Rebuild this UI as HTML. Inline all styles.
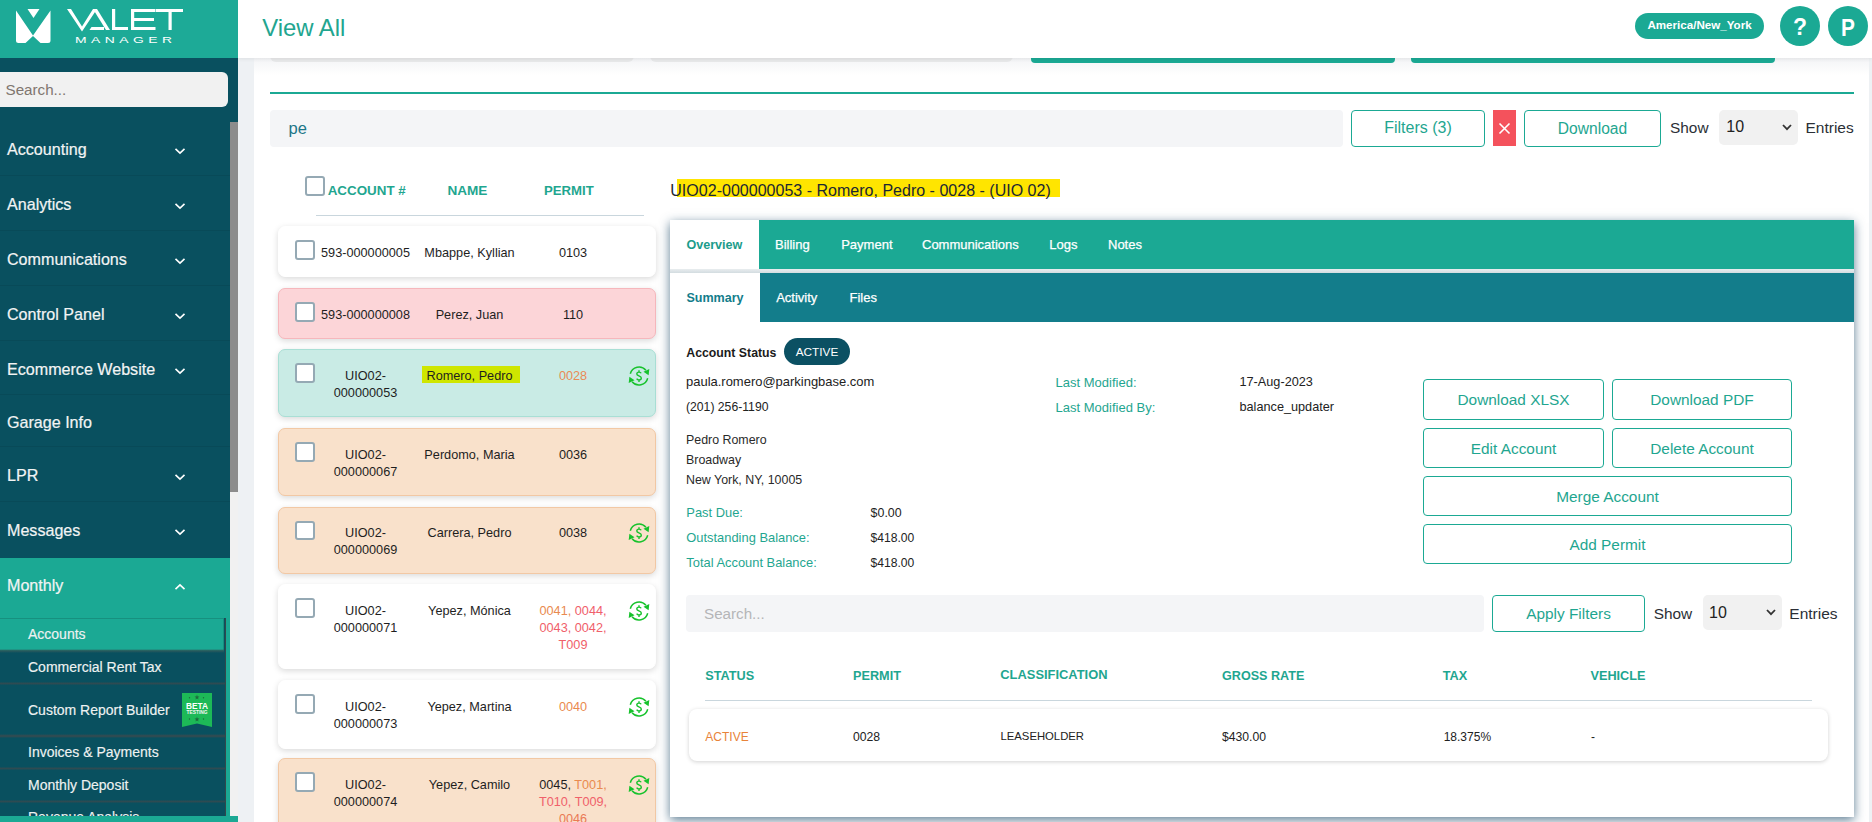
<!DOCTYPE html>
<html><head><meta charset="utf-8"><title>View All</title>
<style>
html,body{margin:0;padding:0;}
body{width:1872px;height:822px;overflow:hidden;position:relative;background:#eef1f4;font-family:"Liberation Sans",sans-serif;}
.t{position:absolute;line-height:1;white-space:nowrap;}
.r{position:absolute;box-sizing:border-box;}
svg{position:absolute;overflow:visible;}
</style></head><body>

<div class="r" style="left:254px;top:58px;width:1615px;height:764px;background:#ffffff;"></div>
<div class="r" style="left:254px;top:58px;width:1615px;height:17px;background:linear-gradient(#f3f4f6,#ffffff);"></div>
<div class="r" style="left:270px;top:50px;width:364px;height:11.5px;background:#e8e9ea;border-radius:0 0 6px 6px;"></div>
<div class="r" style="left:650px;top:50px;width:363px;height:11.5px;background:#e8e9ea;border-radius:0 0 6px 6px;"></div>
<div class="r" style="left:1031px;top:50px;width:364px;height:12.600000000000001px;background:#1ba994;border-radius:0 0 4px 4px;"></div>
<div class="r" style="left:1411px;top:50px;width:364px;height:12.600000000000001px;background:#1ba994;border-radius:0 0 4px 4px;"></div>
<div class="r" style="left:270px;top:92px;width:1584px;height:2px;background:#1ba994;"></div>
<div class="r" style="left:270px;top:110px;width:1073px;height:37px;background:#f4f5f7;border-radius:4px;"></div>
<div class="t" style="left:288.50px;top:120.43px;font-size:16.5px;color:#1d7688;font-weight:normal;">pe</div>
<div class="r" style="left:1351px;top:110px;width:134px;height:37px;background:#fff;border:1.5px solid #1ba994;border-radius:4px;"></div>
<div class="t" style="left:1351.00px;top:120.46px;width:134px;text-align:center;font-size:16px;color:#1fa690;font-weight:normal;">Filters (3)</div>
<div class="r" style="left:1493px;top:110px;width:23px;height:36px;background:#f4525c;"></div>
<svg style="left:1499px;top:122.5px" width="11" height="11" viewBox="0 0 11 11"><path d="M0.5 0.5L10.5 10.5M10.5 0.5L0.5 10.5" stroke="#fff" stroke-width="1.6"/></svg>
<div class="r" style="left:1524px;top:110px;width:137px;height:37px;background:#fff;border:1.5px solid #1ba994;border-radius:4px;"></div>
<div class="t" style="left:1524.00px;top:120.79px;width:137px;text-align:center;font-size:15.6px;color:#1fa690;font-weight:normal;">Download</div>
<div class="t" style="left:1670.00px;top:119.76px;font-size:15.4px;color:#2b2f36;font-weight:normal;">Show</div>
<div class="r" style="left:1719px;top:110px;width:79px;height:35px;background:#f1f1f1;border-radius:5px;"></div>
<div class="t" style="left:1726.30px;top:119.46px;font-size:16px;color:#222;font-weight:normal;">10</div>
<svg style="left:1782px;top:124px" width="10" height="7" viewBox="0 0 10 7"><path d="M1 1L5 5.2L9 1" fill="none" stroke="#333" stroke-width="1.8"/></svg>
<div class="t" style="left:1805.50px;top:119.68px;font-size:15.5px;color:#2b2f36;font-weight:normal;">Entries</div>
<div class="r" style="left:305px;top:176px;width:19.5px;height:19.5px;background:#fff;border:2px solid #95a9b4;border-radius:3px;"></div>
<div class="t" style="left:327.70px;top:183.96px;font-size:13.4px;color:#1fa690;font-weight:bold;">ACCOUNT #</div>
<div class="t" style="left:447.40px;top:183.79px;font-size:13.6px;color:#1fa690;font-weight:bold;">NAME</div>
<div class="t" style="left:544.00px;top:184.13px;font-size:13.2px;color:#1fa690;font-weight:bold;">PERMIT</div>
<div class="r" style="left:316px;top:215px;width:328px;height:1px;background:#c9d6dd;"></div>
<div class="r" style="left:677px;top:178.5px;width:383px;height:18.0px;background:#ffe500;"></div>
<div class="t" style="left:670.30px;top:182.21px;font-size:16.05px;color:#1b2733;font-weight:normal;">UIO02-000000053 - Romero, Pedro - 0028 - (UIO 02)</div>
<div class="r" style="left:278px;top:226px;width:378px;height:51px;background:#ffffff;border:1px solid #ffffff;border-radius:7px;box-shadow:0 2px 6px rgba(0,0,0,0.15);"></div>
<div class="r" style="left:295px;top:240.2px;width:19.5px;height:19.5px;background:#fff;border:2px solid #95a9b4;border-radius:3px;"></div>
<div class="t" style="left:305.50px;top:246.95px;width:120px;text-align:center;font-size:12.7px;color:#1e1e1e;font-weight:normal;">593-000000005</div>
<div class="t" style="left:409.50px;top:246.95px;width:120px;text-align:center;font-size:12.7px;color:#1e1e1e;font-weight:normal;">Mbappe, Kyllian</div>
<div class="t" style="left:518.00px;top:246.95px;width:110px;text-align:center;font-size:12.7px;color:#1e1e1e;font-weight:normal;">0103</div>
<div class="r" style="left:278px;top:288px;width:378px;height:51px;background:#fcd5d8;border:1px solid #f6b7bc;border-radius:7px;box-shadow:0 2px 6px rgba(0,0,0,0.15);"></div>
<div class="r" style="left:295px;top:302.2px;width:19.5px;height:19.5px;background:#fff;border:2px solid #95a9b4;border-radius:3px;"></div>
<div class="t" style="left:305.50px;top:308.95px;width:120px;text-align:center;font-size:12.7px;color:#1e1e1e;font-weight:normal;">593-000000008</div>
<div class="t" style="left:409.50px;top:308.95px;width:120px;text-align:center;font-size:12.7px;color:#1e1e1e;font-weight:normal;">Perez, Juan</div>
<div class="t" style="left:518.00px;top:308.95px;width:110px;text-align:center;font-size:12.7px;color:#1e1e1e;font-weight:normal;">110</div>
<div class="r" style="left:278px;top:349px;width:378px;height:68px;background:#c9ebe5;border:1px solid #a9dfd5;border-radius:7px;box-shadow:0 2px 6px rgba(0,0,0,0.15);"></div>
<div class="r" style="left:295px;top:363.2px;width:19.5px;height:19.5px;background:#fff;border:2px solid #95a9b4;border-radius:3px;"></div>
<div class="t" style="left:305.50px;top:369.95px;width:120px;text-align:center;font-size:12.7px;color:#1e1e1e;font-weight:normal;">UIO02-</div>
<div class="t" style="left:305.50px;top:386.95px;width:120px;text-align:center;font-size:12.7px;color:#1e1e1e;font-weight:normal;">000000053</div>
<div class="r" style="left:422.4px;top:365.5px;width:97.60000000000002px;height:17.5px;background:#cfe600;"></div>
<div class="t" style="left:409.50px;top:369.95px;width:120px;text-align:center;font-size:12.7px;color:#1e1e1e;font-weight:normal;">Romero, Pedro</div>
<div class="t" style="left:518.00px;top:369.95px;width:110px;text-align:center;font-size:12.7px;color:#1e1e1e;font-weight:normal;"><span style="color:#ea8a55">0028</span></div>
<svg style="left:628.5px;top:365.8px" width="20" height="20" viewBox="0 0 20 20"><g fill="none" stroke="#17c22c" stroke-width="1.5"><path d="M1.3 7.7A9 9 0 0 1 16.9 4.2"/><path d="M18.7 12.3A9 9 0 0 1 3.1 15.8"/><path d="M12.2 7.3C11.8 6.5 11 6.1 10 6.1C8.7 6.1 7.8 6.8 7.8 7.9C7.8 10.1 12.3 9.5 12.3 12C12.3 13.2 11.3 13.9 10 13.9C8.9 13.9 8.1 13.4 7.7 12.6M10 4.2V6.1M10 13.9V15.9" stroke-width="1.4"/></g><path d="M19.6 9.3L20.3 3.1L14.5 5.8Z" fill="#17c22c"/><path d="M0.4 10.7L-0.3 16.9L5.5 14.2Z" fill="#17c22c"/></svg>
<div class="r" style="left:278px;top:428px;width:378px;height:68px;background:#f9e1cb;border:1px solid #f2c8a4;border-radius:7px;box-shadow:0 2px 6px rgba(0,0,0,0.15);"></div>
<div class="r" style="left:295px;top:442.2px;width:19.5px;height:19.5px;background:#fff;border:2px solid #95a9b4;border-radius:3px;"></div>
<div class="t" style="left:305.50px;top:448.95px;width:120px;text-align:center;font-size:12.7px;color:#1e1e1e;font-weight:normal;">UIO02-</div>
<div class="t" style="left:305.50px;top:465.95px;width:120px;text-align:center;font-size:12.7px;color:#1e1e1e;font-weight:normal;">000000067</div>
<div class="t" style="left:409.50px;top:448.95px;width:120px;text-align:center;font-size:12.7px;color:#1e1e1e;font-weight:normal;">Perdomo, Maria</div>
<div class="t" style="left:518.00px;top:448.95px;width:110px;text-align:center;font-size:12.7px;color:#1e1e1e;font-weight:normal;">0036</div>
<div class="r" style="left:278px;top:506.5px;width:378px;height:67.5px;background:#f9e1cb;border:1px solid #f2c8a4;border-radius:7px;box-shadow:0 2px 6px rgba(0,0,0,0.15);"></div>
<div class="r" style="left:295px;top:520.7px;width:19.5px;height:19.5px;background:#fff;border:2px solid #95a9b4;border-radius:3px;"></div>
<div class="t" style="left:305.50px;top:527.45px;width:120px;text-align:center;font-size:12.7px;color:#1e1e1e;font-weight:normal;">UIO02-</div>
<div class="t" style="left:305.50px;top:544.45px;width:120px;text-align:center;font-size:12.7px;color:#1e1e1e;font-weight:normal;">000000069</div>
<div class="t" style="left:409.50px;top:527.45px;width:120px;text-align:center;font-size:12.7px;color:#1e1e1e;font-weight:normal;">Carrera, Pedro</div>
<div class="t" style="left:518.00px;top:527.45px;width:110px;text-align:center;font-size:12.7px;color:#1e1e1e;font-weight:normal;">0038</div>
<svg style="left:628.5px;top:523.3px" width="20" height="20" viewBox="0 0 20 20"><g fill="none" stroke="#17c22c" stroke-width="1.5"><path d="M1.3 7.7A9 9 0 0 1 16.9 4.2"/><path d="M18.7 12.3A9 9 0 0 1 3.1 15.8"/><path d="M12.2 7.3C11.8 6.5 11 6.1 10 6.1C8.7 6.1 7.8 6.8 7.8 7.9C7.8 10.1 12.3 9.5 12.3 12C12.3 13.2 11.3 13.9 10 13.9C8.9 13.9 8.1 13.4 7.7 12.6M10 4.2V6.1M10 13.9V15.9" stroke-width="1.4"/></g><path d="M19.6 9.3L20.3 3.1L14.5 5.8Z" fill="#17c22c"/><path d="M0.4 10.7L-0.3 16.9L5.5 14.2Z" fill="#17c22c"/></svg>
<div class="r" style="left:278px;top:584px;width:378px;height:85px;background:#ffffff;border:1px solid #ffffff;border-radius:7px;box-shadow:0 2px 6px rgba(0,0,0,0.15);"></div>
<div class="r" style="left:295px;top:598.2px;width:19.5px;height:19.5px;background:#fff;border:2px solid #95a9b4;border-radius:3px;"></div>
<div class="t" style="left:305.50px;top:604.95px;width:120px;text-align:center;font-size:12.7px;color:#1e1e1e;font-weight:normal;">UIO02-</div>
<div class="t" style="left:305.50px;top:621.95px;width:120px;text-align:center;font-size:12.7px;color:#1e1e1e;font-weight:normal;">000000071</div>
<div class="t" style="left:409.50px;top:604.95px;width:120px;text-align:center;font-size:12.7px;color:#1e1e1e;font-weight:normal;">Yepez, M&oacute;nica</div>
<div class="t" style="left:518.00px;top:604.95px;width:110px;text-align:center;font-size:12.7px;color:#1e1e1e;font-weight:normal;"><span style="color:#e98a4f">0041,</span> <span style="color:#f0606a">0044,</span></div>
<div class="t" style="left:518.00px;top:621.95px;width:110px;text-align:center;font-size:12.7px;color:#1e1e1e;font-weight:normal;"><span style="color:#f0606a">0043, 0042,</span></div>
<div class="t" style="left:518.00px;top:638.95px;width:110px;text-align:center;font-size:12.7px;color:#1e1e1e;font-weight:normal;"><span style="color:#f0606a">T009</span></div>
<svg style="left:628.5px;top:600.8px" width="20" height="20" viewBox="0 0 20 20"><g fill="none" stroke="#17c22c" stroke-width="1.5"><path d="M1.3 7.7A9 9 0 0 1 16.9 4.2"/><path d="M18.7 12.3A9 9 0 0 1 3.1 15.8"/><path d="M12.2 7.3C11.8 6.5 11 6.1 10 6.1C8.7 6.1 7.8 6.8 7.8 7.9C7.8 10.1 12.3 9.5 12.3 12C12.3 13.2 11.3 13.9 10 13.9C8.9 13.9 8.1 13.4 7.7 12.6M10 4.2V6.1M10 13.9V15.9" stroke-width="1.4"/></g><path d="M19.6 9.3L20.3 3.1L14.5 5.8Z" fill="#17c22c"/><path d="M0.4 10.7L-0.3 16.9L5.5 14.2Z" fill="#17c22c"/></svg>
<div class="r" style="left:278px;top:680px;width:378px;height:68.5px;background:#ffffff;border:1px solid #ffffff;border-radius:7px;box-shadow:0 2px 6px rgba(0,0,0,0.15);"></div>
<div class="r" style="left:295px;top:694.2px;width:19.5px;height:19.5px;background:#fff;border:2px solid #95a9b4;border-radius:3px;"></div>
<div class="t" style="left:305.50px;top:700.95px;width:120px;text-align:center;font-size:12.7px;color:#1e1e1e;font-weight:normal;">UIO02-</div>
<div class="t" style="left:305.50px;top:717.95px;width:120px;text-align:center;font-size:12.7px;color:#1e1e1e;font-weight:normal;">000000073</div>
<div class="t" style="left:409.50px;top:700.95px;width:120px;text-align:center;font-size:12.7px;color:#1e1e1e;font-weight:normal;">Yepez, Martina</div>
<div class="t" style="left:518.00px;top:700.95px;width:110px;text-align:center;font-size:12.7px;color:#1e1e1e;font-weight:normal;"><span style="color:#e98a4f">0040</span></div>
<svg style="left:628.5px;top:696.8px" width="20" height="20" viewBox="0 0 20 20"><g fill="none" stroke="#17c22c" stroke-width="1.5"><path d="M1.3 7.7A9 9 0 0 1 16.9 4.2"/><path d="M18.7 12.3A9 9 0 0 1 3.1 15.8"/><path d="M12.2 7.3C11.8 6.5 11 6.1 10 6.1C8.7 6.1 7.8 6.8 7.8 7.9C7.8 10.1 12.3 9.5 12.3 12C12.3 13.2 11.3 13.9 10 13.9C8.9 13.9 8.1 13.4 7.7 12.6M10 4.2V6.1M10 13.9V15.9" stroke-width="1.4"/></g><path d="M19.6 9.3L20.3 3.1L14.5 5.8Z" fill="#17c22c"/><path d="M0.4 10.7L-0.3 16.9L5.5 14.2Z" fill="#17c22c"/></svg>
<div class="r" style="left:278px;top:758px;width:378px;height:82px;background:#f9e1cb;border:1px solid #f2c8a4;border-radius:7px;box-shadow:0 2px 6px rgba(0,0,0,0.15);"></div>
<div class="r" style="left:295px;top:772.2px;width:19.5px;height:19.5px;background:#fff;border:2px solid #95a9b4;border-radius:3px;"></div>
<div class="t" style="left:305.50px;top:778.95px;width:120px;text-align:center;font-size:12.7px;color:#1e1e1e;font-weight:normal;">UIO02-</div>
<div class="t" style="left:305.50px;top:795.95px;width:120px;text-align:center;font-size:12.7px;color:#1e1e1e;font-weight:normal;">000000074</div>
<div class="t" style="left:409.50px;top:778.95px;width:120px;text-align:center;font-size:12.7px;color:#1e1e1e;font-weight:normal;">Yepez, Camilo</div>
<div class="t" style="left:518.00px;top:778.95px;width:110px;text-align:center;font-size:12.7px;color:#1e1e1e;font-weight:normal;">0045, <span style="color:#e98a4f">T001,</span></div>
<div class="t" style="left:518.00px;top:795.95px;width:110px;text-align:center;font-size:12.7px;color:#1e1e1e;font-weight:normal;"><span style="color:#f0606a">T010, T009,</span></div>
<div class="t" style="left:518.00px;top:812.95px;width:110px;text-align:center;font-size:12.7px;color:#1e1e1e;font-weight:normal;"><span style="color:#ea7a55">0046</span></div>
<svg style="left:628.5px;top:774.8px" width="20" height="20" viewBox="0 0 20 20"><g fill="none" stroke="#17c22c" stroke-width="1.5"><path d="M1.3 7.7A9 9 0 0 1 16.9 4.2"/><path d="M18.7 12.3A9 9 0 0 1 3.1 15.8"/><path d="M12.2 7.3C11.8 6.5 11 6.1 10 6.1C8.7 6.1 7.8 6.8 7.8 7.9C7.8 10.1 12.3 9.5 12.3 12C12.3 13.2 11.3 13.9 10 13.9C8.9 13.9 8.1 13.4 7.7 12.6M10 4.2V6.1M10 13.9V15.9" stroke-width="1.4"/></g><path d="M19.6 9.3L20.3 3.1L14.5 5.8Z" fill="#17c22c"/><path d="M0.4 10.7L-0.3 16.9L5.5 14.2Z" fill="#17c22c"/></svg>
<div class="r" style="left:670px;top:220px;width:1184px;height:597px;background:#ffffff;box-shadow:0 3px 10px rgba(30,75,105,0.72);"></div>
<div class="r" style="left:670px;top:220px;width:1184px;height:49px;background:#1ba994;"></div>
<div class="r" style="left:670px;top:220px;width:89px;height:49px;background:#ffffff;"></div>
<div class="r" style="left:670px;top:269px;width:1184px;height:4px;background:linear-gradient(#e9edef,#d3dce0);"></div>
<div class="r" style="left:670px;top:273px;width:1184px;height:49px;background:#137d8b;"></div>
<div class="r" style="left:670px;top:273px;width:90px;height:49px;background:#ffffff;"></div>
<div class="t" style="left:686.40px;top:239.43px;font-size:12.6px;color:#1b9c8b;font-weight:bold;">Overview</div>
<div class="t" style="left:775.00px;top:238.10px;font-size:13px;color:#fff;font-weight:normal;-webkit-text-stroke:0.25px #fff;">Billing</div>
<div class="t" style="left:841.20px;top:238.10px;font-size:13px;color:#fff;font-weight:normal;-webkit-text-stroke:0.25px #fff;">Payment</div>
<div class="t" style="left:922.00px;top:238.10px;font-size:13px;color:#fff;font-weight:normal;-webkit-text-stroke:0.25px #fff;">Communications</div>
<div class="t" style="left:1049.30px;top:238.10px;font-size:13px;color:#fff;font-weight:normal;-webkit-text-stroke:0.25px #fff;">Logs</div>
<div class="t" style="left:1108.00px;top:238.10px;font-size:13px;color:#fff;font-weight:normal;-webkit-text-stroke:0.25px #fff;">Notes</div>
<div class="t" style="left:686.40px;top:292.18px;font-size:12.55px;color:#137d8b;font-weight:bold;">Summary</div>
<div class="t" style="left:776.20px;top:291.00px;font-size:13px;color:#fff;font-weight:normal;-webkit-text-stroke:0.25px #fff;">Activity</div>
<div class="t" style="left:849.50px;top:291.00px;font-size:13px;color:#fff;font-weight:normal;-webkit-text-stroke:0.25px #fff;">Files</div>
<div class="t" style="left:686.25px;top:346.89px;font-size:12.3px;color:#1b1b1b;font-weight:bold;">Account Status</div>
<div class="r" style="left:784px;top:338px;width:66px;height:26.600000000000023px;background:#0b5063;border-radius:14px;"></div>
<div class="t" style="left:784.00px;top:347.31px;width:66px;text-align:center;font-size:11.8px;color:#fff;font-weight:normal;">ACTIVE</div>
<div class="t" style="left:686.00px;top:376.02px;font-size:12.97px;color:#222;font-weight:normal;">paula.romero@parkingbase.com</div>
<div class="t" style="left:686.00px;top:401.17px;font-size:12.2px;color:#222;font-weight:normal;">(201) 256-1190</div>
<div class="t" style="left:686.00px;top:434.30px;font-size:12.4px;color:#2a2a2a;font-weight:normal;">Pedro Romero</div>
<div class="t" style="left:686.00px;top:454.10px;font-size:12.4px;color:#2a2a2a;font-weight:normal;">Broadway</div>
<div class="t" style="left:686.00px;top:473.90px;font-size:12.4px;color:#2a2a2a;font-weight:normal;">New York, NY, 10005</div>
<div class="t" style="left:686.30px;top:506.98px;font-size:12.9px;color:#1fa690;font-weight:normal;">Past Due:</div>
<div class="t" style="left:686.30px;top:531.78px;font-size:12.9px;color:#1fa690;font-weight:normal;">Outstanding Balance:</div>
<div class="t" style="left:686.30px;top:556.58px;font-size:12.9px;color:#1fa690;font-weight:normal;">Total Account Balance:</div>
<div class="t" style="left:870.60px;top:507.40px;font-size:12.4px;color:#222;font-weight:normal;">$0.00</div>
<div class="t" style="left:870.60px;top:532.46px;font-size:12.1px;color:#222;font-weight:normal;">$418.00</div>
<div class="t" style="left:870.60px;top:557.26px;font-size:12.1px;color:#222;font-weight:normal;">$418.00</div>
<div class="t" style="left:1055.60px;top:375.80px;font-size:13.0px;color:#1fa690;font-weight:normal;">Last Modified:</div>
<div class="t" style="left:1055.60px;top:400.80px;font-size:13.0px;color:#1fa690;font-weight:normal;">Last Modified By:</div>
<div class="t" style="left:1239.50px;top:376.05px;font-size:12.7px;color:#222;font-weight:normal;">17-Aug-2023</div>
<div class="t" style="left:1239.50px;top:401.05px;font-size:12.7px;color:#222;font-weight:normal;">balance_updater</div>
<div class="r" style="left:1423px;top:379px;width:181px;height:41px;background:#fff;border:1.5px solid #1ba994;border-radius:4px;"></div>
<div class="t" style="left:1423.00px;top:392.26px;width:181px;text-align:center;font-size:15.4px;color:#1fa690;font-weight:normal;">Download XLSX</div>
<div class="r" style="left:1612px;top:379px;width:180px;height:41px;background:#fff;border:1.5px solid #1ba994;border-radius:4px;"></div>
<div class="t" style="left:1612.00px;top:392.26px;width:180px;text-align:center;font-size:15.4px;color:#1fa690;font-weight:normal;">Download PDF</div>
<div class="r" style="left:1423px;top:428px;width:181px;height:40px;background:#fff;border:1.5px solid #1ba994;border-radius:4px;"></div>
<div class="t" style="left:1423.00px;top:440.76px;width:181px;text-align:center;font-size:15.4px;color:#1fa690;font-weight:normal;">Edit Account</div>
<div class="r" style="left:1612px;top:428px;width:180px;height:40px;background:#fff;border:1.5px solid #1ba994;border-radius:4px;"></div>
<div class="t" style="left:1612.00px;top:440.76px;width:180px;text-align:center;font-size:15.4px;color:#1fa690;font-weight:normal;">Delete Account</div>
<div class="r" style="left:1423px;top:476px;width:369px;height:40px;background:#fff;border:1.5px solid #1ba994;border-radius:4px;"></div>
<div class="t" style="left:1423.00px;top:488.86px;width:369px;text-align:center;font-size:15.4px;color:#1fa690;font-weight:normal;">Merge Account</div>
<div class="r" style="left:1423px;top:524px;width:369px;height:40px;background:#fff;border:1.5px solid #1ba994;border-radius:4px;"></div>
<div class="t" style="left:1423.00px;top:536.96px;width:369px;text-align:center;font-size:15.4px;color:#1fa690;font-weight:normal;">Add Permit</div>
<div class="r" style="left:686px;top:595px;width:798px;height:36.60000000000002px;background:#f4f5f7;border-radius:4px;"></div>
<div class="t" style="left:704.00px;top:606.13px;font-size:15.2px;color:#b4b6b8;font-weight:normal;">Search...</div>
<div class="r" style="left:1492px;top:595px;width:153px;height:36.5px;background:#fff;border:1.5px solid #1ba994;border-radius:4px;"></div>
<div class="t" style="left:1492.00px;top:605.96px;width:153px;text-align:center;font-size:15.4px;color:#1fa690;font-weight:normal;">Apply Filters</div>
<div class="t" style="left:1653.70px;top:605.86px;font-size:15.4px;color:#2b2f36;font-weight:normal;">Show</div>
<div class="r" style="left:1703px;top:595px;width:79px;height:35px;background:#f1f1f1;border-radius:5px;"></div>
<div class="t" style="left:1709.00px;top:605.46px;font-size:16px;color:#222;font-weight:normal;">10</div>
<svg style="left:1766px;top:609px" width="10" height="7" viewBox="0 0 10 7"><path d="M1 1L5 5.2L9 1" fill="none" stroke="#333" stroke-width="1.8"/></svg>
<div class="t" style="left:1789.30px;top:605.78px;font-size:15.5px;color:#2b2f36;font-weight:normal;">Entries</div>
<div class="t" style="left:705.30px;top:669.55px;font-size:12.7px;color:#1fa690;font-weight:bold;">STATUS</div>
<div class="t" style="left:853.00px;top:669.55px;font-size:12.7px;color:#1fa690;font-weight:bold;">PERMIT</div>
<div class="t" style="left:1000.30px;top:669.38px;font-size:12.9px;color:#1fa690;font-weight:bold;">CLASSIFICATION</div>
<div class="t" style="left:1222.00px;top:669.63px;font-size:12.6px;color:#1fa690;font-weight:bold;">GROSS RATE</div>
<div class="t" style="left:1442.70px;top:669.55px;font-size:12.7px;color:#1fa690;font-weight:bold;">TAX</div>
<div class="t" style="left:1590.50px;top:669.55px;font-size:12.7px;color:#1fa690;font-weight:bold;">VEHICLE</div>
<div class="r" style="left:705px;top:700px;width:1107px;height:1px;background:#c9d6dd;"></div>
<div class="r" style="left:689px;top:709px;width:1139px;height:52px;background:#fff;border-radius:8px;box-shadow:0 1px 4px rgba(0,0,0,0.18);"></div>
<div class="t" style="left:705.30px;top:730.84px;font-size:12px;color:#e8833a;font-weight:normal;">ACTIVE</div>
<div class="t" style="left:853.00px;top:730.67px;font-size:12.2px;color:#222;font-weight:normal;">0028</div>
<div class="t" style="left:1000.50px;top:731.43px;font-size:11.3px;color:#222;font-weight:normal;">LEASEHOLDER</div>
<div class="t" style="left:1222.00px;top:730.67px;font-size:12.2px;color:#222;font-weight:normal;">$430.00</div>
<div class="t" style="left:1443.70px;top:730.84px;font-size:12px;color:#222;font-weight:normal;">18.375%</div>
<div class="t" style="left:1591.00px;top:730.84px;font-size:12px;color:#222;font-weight:normal;">-</div>
<div class="r" style="left:238px;top:0px;width:1634px;height:58px;background:#ffffff;box-shadow:0 1px 4px rgba(0,0,0,0.08);"></div>
<div class="t" style="left:262.20px;top:15.87px;font-size:23.9px;color:#22a58f;font-weight:normal;">View All</div>
<div class="r" style="left:1635px;top:13px;width:129px;height:26px;background:#1ba994;border-radius:13px;"></div>
<div class="t" style="left:1635.00px;top:19.08px;width:129px;text-align:center;font-size:11.6px;color:#fff;font-weight:bold;">America/New_York</div>
<div class="r" style="left:1780px;top:6px;width:40px;height:40px;border-radius:50%;background:#1ba994;"></div>
<div class="r" style="left:1828px;top:6px;width:40px;height:40px;border-radius:50%;background:#1ba994;"></div>
<div class="t" style="left:1780.00px;top:15.53px;width:40px;text-align:center;font-size:23px;color:#fff;font-weight:bold;">?</div>
<div class="t" style="left:1828.00px;top:16.66px;width:40px;text-align:center;font-size:23.2px;color:#fff;font-weight:bold;transform:scaleX(0.9);">P</div>
<div class="r" style="left:0px;top:0px;width:238px;height:58px;background:#1daa97;"></div>
<div class="r" style="left:0px;top:58px;width:238px;height:764px;background:#09505f;"></div>
<svg style="left:0;top:0" width="238" height="58" viewBox="0 0 238 58">
<path d="M16 10.5L33 35.5L50.5 10.5V40.5Q50.5 43 48 43H40.5L33 36L25.5 43H18.5Q16 43 16 40.5Z" fill="#fff"/>
<path d="M27.5 9H39.5L33.5 18Z" fill="#fff"/>
<g fill="#fff">
<path d="M67 9H71L82 26.5L93 9H97L82 31.5Z"/>
<path d="M93 9H97L110 30H106Z"/>
<path d="M91.5 27H104V30H89.5Z"/>
<rect x="112" y="9" width="3.2" height="21"/>
<rect x="112" y="27" width="16" height="3"/>
<rect x="131" y="9" width="3.2" height="21"/>
<rect x="131" y="9" width="24.5" height="3"/>
<rect x="131" y="18" width="23" height="3"/>
<rect x="131" y="27" width="24.5" height="3"/>
<rect x="156" y="9" width="27" height="3"/>
<rect x="168.5" y="9" width="3.2" height="21"/>
</g>
<text transform="translate(75,43.2) scale(1.45,1)" x="0" y="0" font-family="Liberation Sans" font-size="9.6" fill="#fff" textLength="66.9" lengthAdjust="spacing">MANAGER</text>
</svg>
<div class="r" style="left:0px;top:72px;width:228px;height:35px;background:#f1f1f1;border-radius:0 6px 6px 0;"></div>
<div class="t" style="left:5.50px;top:82.13px;font-size:15.2px;color:#80766f;font-weight:normal;">Search...</div>
<div class="r" style="left:230px;top:122px;width:8px;height:370px;background:#8c8c8c;"></div>
<div class="r" style="left:230px;top:492px;width:8px;height:330px;background:#f1f1f1;"></div>
<div class="r" style="left:0px;top:175px;width:230px;height:1px;background:rgba(0,0,0,0.07);"></div>
<div class="r" style="left:0px;top:230px;width:230px;height:1px;background:rgba(0,0,0,0.07);"></div>
<div class="r" style="left:0px;top:285px;width:230px;height:1px;background:rgba(0,0,0,0.07);"></div>
<div class="r" style="left:0px;top:340px;width:230px;height:1px;background:rgba(0,0,0,0.07);"></div>
<div class="r" style="left:0px;top:393.5px;width:230px;height:1.0px;background:rgba(0,0,0,0.07);"></div>
<div class="r" style="left:0px;top:446px;width:230px;height:1px;background:rgba(0,0,0,0.07);"></div>
<div class="r" style="left:0px;top:501px;width:230px;height:1px;background:rgba(0,0,0,0.07);"></div>
<div class="t" style="left:7.00px;top:141.37px;font-size:16.1px;color:#f2f4f4;font-weight:normal;-webkit-text-stroke:0.2px #f2f4f4;">Accounting</div>
<svg style="left:175px;top:147.8px" width="10" height="6" viewBox="0 0 10 6"><path d="M0.5 0.9L5 5.2L9.5 0.9" fill="none" stroke="#fff" stroke-width="1.6"/></svg>
<div class="t" style="left:7.00px;top:196.37px;font-size:16.1px;color:#f2f4f4;font-weight:normal;-webkit-text-stroke:0.2px #f2f4f4;">Analytics</div>
<svg style="left:175px;top:202.8px" width="10" height="6" viewBox="0 0 10 6"><path d="M0.5 0.9L5 5.2L9.5 0.9" fill="none" stroke="#fff" stroke-width="1.6"/></svg>
<div class="t" style="left:7.00px;top:251.37px;font-size:16.1px;color:#f2f4f4;font-weight:normal;-webkit-text-stroke:0.2px #f2f4f4;">Communications</div>
<svg style="left:175px;top:257.8px" width="10" height="6" viewBox="0 0 10 6"><path d="M0.5 0.9L5 5.2L9.5 0.9" fill="none" stroke="#fff" stroke-width="1.6"/></svg>
<div class="t" style="left:7.00px;top:306.37px;font-size:16.1px;color:#f2f4f4;font-weight:normal;-webkit-text-stroke:0.2px #f2f4f4;">Control Panel</div>
<svg style="left:175px;top:312.8px" width="10" height="6" viewBox="0 0 10 6"><path d="M0.5 0.9L5 5.2L9.5 0.9" fill="none" stroke="#fff" stroke-width="1.6"/></svg>
<div class="t" style="left:7.00px;top:361.37px;font-size:16.1px;color:#f2f4f4;font-weight:normal;-webkit-text-stroke:0.2px #f2f4f4;">Ecommerce Website</div>
<svg style="left:175px;top:367.8px" width="10" height="6" viewBox="0 0 10 6"><path d="M0.5 0.9L5 5.2L9.5 0.9" fill="none" stroke="#fff" stroke-width="1.6"/></svg>
<div class="t" style="left:7.00px;top:413.77px;font-size:16.1px;color:#f2f4f4;font-weight:normal;-webkit-text-stroke:0.2px #f2f4f4;">Garage Info</div>
<div class="t" style="left:7.00px;top:467.37px;font-size:16.1px;color:#f2f4f4;font-weight:normal;-webkit-text-stroke:0.2px #f2f4f4;">LPR</div>
<svg style="left:175px;top:473.8px" width="10" height="6" viewBox="0 0 10 6"><path d="M0.5 0.9L5 5.2L9.5 0.9" fill="none" stroke="#fff" stroke-width="1.6"/></svg>
<div class="t" style="left:7.00px;top:522.37px;font-size:16.1px;color:#f2f4f4;font-weight:normal;-webkit-text-stroke:0.2px #f2f4f4;">Messages</div>
<svg style="left:175px;top:528.8px" width="10" height="6" viewBox="0 0 10 6"><path d="M0.5 0.9L5 5.2L9.5 0.9" fill="none" stroke="#fff" stroke-width="1.6"/></svg>
<div class="r" style="left:0px;top:558px;width:230px;height:264px;background:#1ba994;"></div>
<div class="t" style="left:7.00px;top:577.37px;font-size:16.1px;color:#f2f4f4;font-weight:normal;-webkit-text-stroke:0.2px #f2f4f4;">Monthly</div>
<svg style="left:175px;top:583.5px" width="10" height="6" viewBox="0 0 10 6"><path d="M0.5 5.1L5 0.8L9.5 5.1" fill="none" stroke="#fff" stroke-width="1.6"/></svg>
<div class="r" style="left:0px;top:618px;width:226px;height:198px;background:#09505f;border-right:1.5px solid #34474c;"></div>
<div class="r" style="left:0px;top:618px;width:224px;height:33px;background:#1ba994;border:1px solid #17907f;border-left:none;"></div>
<div class="r" style="left:0px;top:649px;width:224px;height:4px;background:linear-gradient(rgba(30,169,149,0),#2c5a5c 45%,rgba(9,80,95,0));"></div>
<div class="r" style="left:0px;top:681.5px;width:225px;height:3.5px;background:linear-gradient(rgba(9,80,95,0),#2e4b52 35%,#2e4b52 65%,rgba(9,80,95,0));"></div>
<div class="r" style="left:0px;top:734px;width:225px;height:3.5px;background:linear-gradient(rgba(9,80,95,0),#2e4b52 35%,#2e4b52 65%,rgba(9,80,95,0));"></div>
<div class="r" style="left:0px;top:766.5px;width:225px;height:3.5px;background:linear-gradient(rgba(9,80,95,0),#2e4b52 35%,#2e4b52 65%,rgba(9,80,95,0));"></div>
<div class="r" style="left:0px;top:799.5px;width:225px;height:3.5px;background:linear-gradient(rgba(9,80,95,0),#2e4b52 35%,#2e4b52 65%,rgba(9,80,95,0));"></div>
<div class="t" style="left:28.00px;top:627.15px;font-size:14px;color:#eef2f2;font-weight:normal;-webkit-text-stroke:0.15px #eef2f2;">Accounts</div>
<div class="t" style="left:28.00px;top:660.15px;font-size:14px;color:#eef2f2;font-weight:normal;-webkit-text-stroke:0.15px #eef2f2;">Commercial Rent Tax</div>
<div class="t" style="left:28.00px;top:702.95px;font-size:14px;color:#eef2f2;font-weight:normal;-webkit-text-stroke:0.15px #eef2f2;">Custom Report Builder</div>
<div class="t" style="left:28.00px;top:744.65px;font-size:14px;color:#eef2f2;font-weight:normal;-webkit-text-stroke:0.15px #eef2f2;">Invoices &amp; Payments</div>
<div class="t" style="left:28.00px;top:778.15px;font-size:14px;color:#eef2f2;font-weight:normal;-webkit-text-stroke:0.15px #eef2f2;">Monthly Deposit</div>
<div class="t" style="left:28.00px;top:809.95px;font-size:14px;color:#eef2f2;font-weight:normal;-webkit-text-stroke:0.15px #eef2f2;">Revenue Analysis</div>
<svg style="left:182px;top:693px" width="30" height="34" viewBox="0 0 30 34">
<path d="M0 0H30V34L15 30.5L0 34Z" fill="#1db957"/>
<text x="15" y="15.6" text-anchor="middle" font-family="Liberation Sans" font-weight="bold" font-size="8.4" fill="#fff" textLength="22" lengthAdjust="spacingAndGlyphs">BETA</text>
<text x="15" y="21.4" text-anchor="middle" font-family="Liberation Sans" font-weight="bold" font-size="4.6" fill="#f4f4f4" textLength="21" lengthAdjust="spacingAndGlyphs">TESTING</text>
<g fill="#1d6b3e"><polygon points="15.00,1.70 15.65,3.41 17.47,3.50 16.05,4.64 16.53,6.40 15.00,5.40 13.47,6.40 13.95,4.64 12.53,3.50 14.35,3.41"/><polygon points="15.00,23.70 15.65,25.41 17.47,25.50 16.05,26.64 16.53,28.40 15.00,27.40 13.47,28.40 13.95,26.64 12.53,25.50 14.35,25.41"/>
<circle cx="7.5" cy="4.7" r="0.7"/><circle cx="21.5" cy="4.7" r="0.7"/><circle cx="7.5" cy="26" r="0.7"/><circle cx="21.5" cy="26" r="0.7"/></g>
</svg>
<div class="r" style="left:0px;top:816px;width:238px;height:6px;background:#1ba994;"></div>
</body></html>
